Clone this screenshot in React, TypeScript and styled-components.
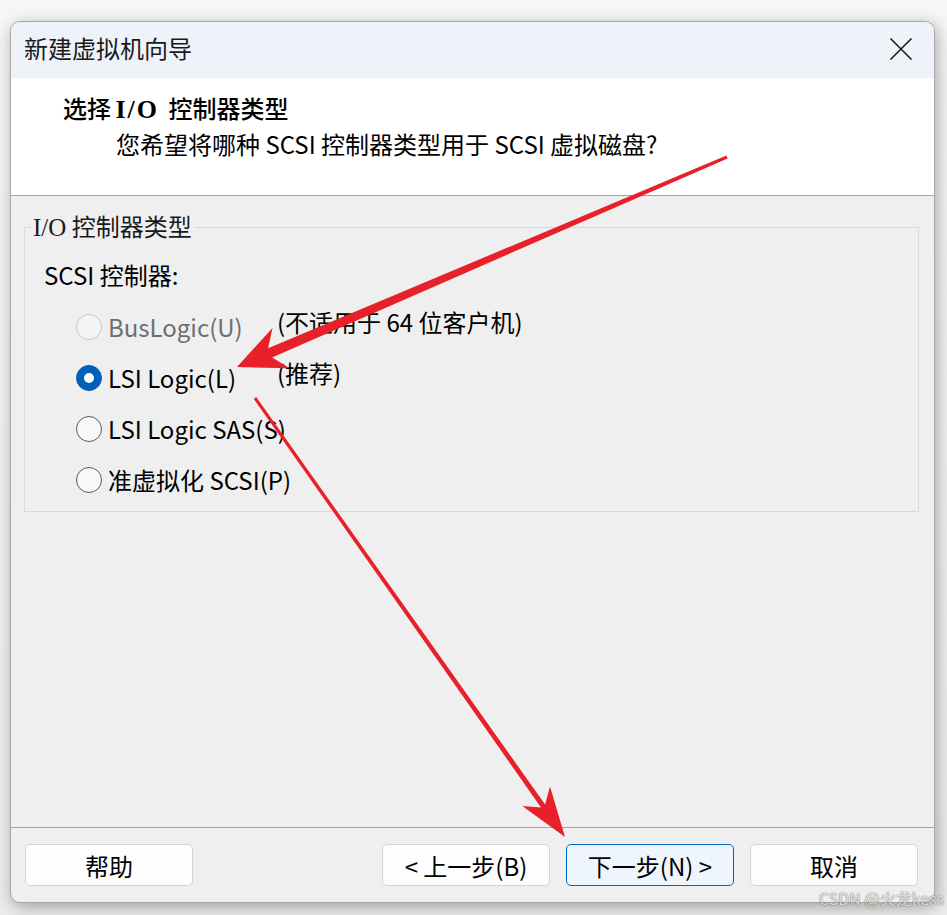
import React from "react";
import styled, { createGlobalStyle } from "styled-components";

const GlobalStyle = createGlobalStyle`
  html, body {
    margin: 0;
    padding: 0;
    background: #f0f0f0;
  }
`;

const FONT = `"Noto Sans CJK SC", "Noto Sans", sans-serif`;

const Page = styled.div`
  position: relative;
  width: 947px;
  height: 915px;
  box-sizing: border-box;
  padding: 21px 0 0 10px;
  overflow: hidden;
  background: linear-gradient(180deg, #f6f6f6 0%, #ececec 100%);
  font-family: ${FONT};
  color: #1a1a1a;
`;

const Window = styled.div`
  width: 925px;
  height: 882px;
  box-sizing: border-box;
  display: flex;
  flex-direction: column;
  border: 1px solid #a8a8a8;
  border-radius: 10px;
  overflow: hidden;
  background: #efefef;
  box-shadow: 2px 4px 16px rgba(0, 0, 0, 0.32);
`;

const TitleBar = styled.div`
  height: 56px;
  flex: none;
  box-sizing: border-box;
  display: flex;
  align-items: center;
  justify-content: space-between;
  padding: 0 21px 2px 13px;
  background: #eef3f9;
  font-size: 24px;
`;

const TitleText = styled.span`
  margin-bottom: 4px;
`;

const CloseButton = styled.svg`
  width: 24px;
  height: 24px;
`;

const Header = styled.div`
  height: 118px;
  flex: none;
  box-sizing: border-box;
  padding: 14px 0 0 52px;
  background: #ffffff;
  border-bottom: 1px solid #a3a3a3;
`;

const HeaderTitle = styled.div`
  font-size: 24px;
  line-height: 32px;
  font-weight: 500;
  color: #000;
`;

const SerifBold = styled.span`
  font-family: "Liberation Serif", serif;
  font-weight: 700;
  font-size: 26px;
  letter-spacing: 2px;
  margin: 0 4px 0 -1px;
`;

const SerifPart = styled.span`
  font-family: "Liberation Serif", serif;
  font-size: 25px;
`;

const HeaderSub = styled.div`
  margin: 2px 0 0 53px;
  font-size: 24px;
  line-height: 32px;
  color: #000;
`;

const Body = styled.div`
  flex: 1;
  padding: 14px 15px 0 13px;
`;

const GroupBox = styled.fieldset`
  margin: 0;
  padding: 15px 10px 6px 8px;
  border: 1px solid #d9d9d9;
  min-width: 0;
`;

const Legend = styled.legend`
  margin-left: -2px;
  padding: 0 2px;
  font-size: 24px;
  line-height: 32px;
  color: #1a1a1a;
`;

const GroupContent = styled.div`
  padding-left: 11px;
`;

const FieldLabel = styled.div`
  font-size: 24px;
  line-height: 32px;
  color: #000;
`;

const Options = styled.div`
  margin: 10px 0 0 32px;
  display: grid;
  grid-template-columns: 201px auto;
  grid-auto-rows: 51px;
  align-items: center;
`;

const Option = styled.label<{ $disabled?: boolean }>`
  display: flex;
  align-items: center;
  gap: 6px;
  font-size: 24px;
  line-height: 32px;
  white-space: nowrap;
  color: ${(p) => (p.$disabled ? "#6e6e6e" : "#000")};
`;

const Radio = styled.span<{ $state: "off" | "on" | "disabled" }>`
  width: 26px;
  height: 26px;
  box-sizing: border-box;
  flex: none;
  border-radius: 50%;
  display: flex;
  align-items: center;
  justify-content: center;
  border: 1px solid
    ${(p) =>
      p.$state === "on" ? "#005fb8" : p.$state === "disabled" ? "#c8c8c8" : "#5c5c5c"};
  background: ${(p) =>
    p.$state === "on" ? "#005fb8" : p.$state === "disabled" ? "#f5f5f5" : "#f8f8f8"};

  &::after {
    content: "";
    display: ${(p) => (p.$state === "on" ? "block" : "none")};
    width: 10px;
    height: 10px;
    border-radius: 50%;
    background: #ffffff;
  }
`;

const Note = styled.span`
  font-size: 24px;
  line-height: 32px;
  color: #000;
  white-space: nowrap;
  align-self: start;
  margin-top: 5px;
`;

const Footer = styled.div`
  height: 75px;
  flex: none;
  box-sizing: border-box;
  border-top: 1px solid #a3a3a3;
  display: flex;
  align-items: flex-start;
  padding: 16px 16px 0 14px;
  gap: 16px;
`;

const Button = styled.button<{ $primary?: boolean }>`
  width: 168px;
  height: 42px;
  box-sizing: border-box;
  border-radius: 5px;
  border: 1px solid ${(p) => (p.$primary ? "#0067c0" : "#d3d3d3")};
  background: ${(p) => (p.$primary ? "#eff5fc" : "#fdfdfd")};
  font-family: ${FONT};
  font-size: 24px;
  color: #000;
  padding: 0;
  display: flex;
  align-items: center;
  justify-content: center;
`;

const Spacer = styled.div`
  flex: 1;
`;

const Overlay = styled.svg`
  position: absolute;
  left: 0;
  top: 0;
  pointer-events: none;
`;

const Watermark = styled.div`
  position: absolute;
  right: 3px;
  bottom: 5px;
  font-family: ${FONT};
  font-size: 16px;
  color: rgba(255, 255, 255, 0.8);
  text-shadow: 0 0 1px rgba(0, 0, 0, 0.55), 0 0 2px rgba(0, 0, 0, 0.25);
`;

type Pt = [number, number];

// tapered arrow shape with swept-back head
function arrowShape(tail: Pt, tip: Pt, w1: number, w2: number, headLen: number, half: number, neckIn: number) {
  const dx = tip[0] - tail[0];
  const dy = tip[1] - tail[1];
  const len = Math.hypot(dx, dy);
  const ux = dx / len;
  const uy = dy / len;
  const nx = -uy;
  const ny = ux;
  const base: Pt = [tip[0] - ux * headLen, tip[1] - uy * headLen];
  const neck: Pt = [tip[0] - ux * (headLen - neckIn), tip[1] - uy * (headLen - neckIn)];
  const pts: Pt[] = [
    [tail[0] + (nx * w1) / 2, tail[1] + (ny * w1) / 2],
    [neck[0] + (nx * w2) / 2, neck[1] + (ny * w2) / 2],
    [base[0] + nx * half, base[1] + ny * half],
    tip,
    [base[0] - nx * half, base[1] - ny * half],
    [neck[0] - (nx * w2) / 2, neck[1] - (ny * w2) / 2],
    [tail[0] - (nx * w1) / 2, tail[1] - (ny * w1) / 2],
  ];
  return pts.map((p) => p.map((v) => v.toFixed(1)).join(",")).join(" ");
}

const options = [
  { label: "BusLogic(U)", state: "disabled" as const, note: "(不适用于 64 位客户机)" },
  { label: "LSI Logic(L)", state: "on" as const, note: "(推荐)" },
  { label: "LSI Logic SAS(S)", state: "off" as const, note: "" },
  { label: "准虚拟化 SCSI(P)", state: "off" as const, note: "" },
];

const App: React.FC = () => {
  return (
    <Page>
      <GlobalStyle />
      <Window>
        <TitleBar>
          <TitleText>新建虚拟机向导</TitleText>
          <CloseButton viewBox="0 0 24 24">
            <path d="M1.5 1.5 L22.5 22.5 M22.5 1.5 L1.5 22.5" stroke="#1a1a1a" strokeWidth="1.6" fill="none" />
          </CloseButton>
        </TitleBar>

        <Header>
          <HeaderTitle>
            选择 <SerifBold>I/O</SerifBold> 控制器类型
          </HeaderTitle>
          <HeaderSub>您希望将哪种 SCSI 控制器类型用于 SCSI 虚拟磁盘?</HeaderSub>
        </Header>

        <Body>
          <GroupBox>
            <Legend>
              <SerifPart>I/O</SerifPart> 控制器类型
            </Legend>
            <GroupContent>
              <FieldLabel>SCSI 控制器:</FieldLabel>
              <Options>
                {options.map((o) => (
                  <React.Fragment key={o.label}>
                    <Option $disabled={o.state === "disabled"}>
                      <Radio $state={o.state} />
                      {o.label}
                    </Option>
                    <Note>{o.note}</Note>
                  </React.Fragment>
                ))}
              </Options>
            </GroupContent>
          </GroupBox>
        </Body>

        <Footer>
          <Button>帮助</Button>
          <Spacer />
          <Button>&lt; 上一步(B)</Button>
          <Button $primary>下一步(N) &gt;</Button>
          <Button>取消</Button>
        </Footer>
      </Window>

      <Overlay width="947" height="915" viewBox="0 0 947 915">
        <polygon points={arrowShape([727, 157], [237, 367], 3, 10, 48, 22, 12)} fill="#e8202a" />
        <polygon points={arrowShape([255, 398], [565, 837], 3, 5, 50, 17, 12)} fill="#e8202a" />
      </Overlay>
      <Watermark>CSDN @火龙kess</Watermark>
    </Page>
  );
};

export default App;
